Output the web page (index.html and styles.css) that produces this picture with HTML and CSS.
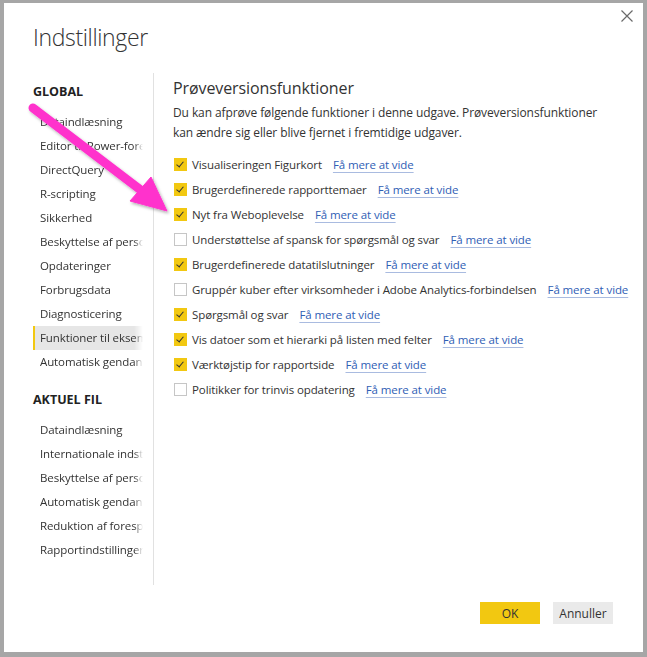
FILE: index.html
```html
<!DOCTYPE html>
<html lang="da">
<head>
<meta charset="utf-8">
<title>Indstillinger</title>
<link rel="stylesheet" href="styles.css">
</head>
<body>
<div class="dialog">
  <div class="header">
    <h1 class="title">Indstillinger</h1>
    <span class="close" aria-label="Luk">
      <svg width="12" height="12" viewBox="0 0 12 12"><path d="M0.5 0.5 L11.5 11.5 M11.5 0.5 L0.5 11.5" stroke="#6a6a6a" stroke-width="1.2" fill="none"/></svg>
    </span>
  </div>
  <div class="main">
    <nav class="sidebar">
      <div class="section-title">GLOBAL</div>
      <ul class="nav-list">
        <li class="nav-item">Dataindlæsning</li>
        <li class="nav-item">Editor til Power-forespørgsel</li>
        <li class="nav-item">DirectQuery</li>
        <li class="nav-item">R-scripting</li>
        <li class="nav-item">Sikkerhed</li>
        <li class="nav-item">Beskyttelse af personlige oplysninger</li>
        <li class="nav-item">Opdateringer</li>
        <li class="nav-item">Forbrugsdata</li>
        <li class="nav-item">Diagnosticering</li>
        <li class="nav-item active">Funktioner til eksempelvisning</li>
        <li class="nav-item">Automatisk gendannelse</li>
      </ul>
      <div class="section-title section-second">AKTUEL FIL</div>
      <ul class="nav-list">
        <li class="nav-item">Dataindlæsning</li>
        <li class="nav-item">Internationale indstillinger</li>
        <li class="nav-item">Beskyttelse af personlige oplysninger</li>
        <li class="nav-item">Automatisk gendannelse</li>
        <li class="nav-item">Reduktion af forespørgsler</li>
        <li class="nav-item">Rapportindstillinger</li>
      </ul>
    </nav>
    <section class="content">
      <h2 class="content-title">Prøveversionsfunktioner</h2>
      <p class="desc">Du kan afprøve følgende funktioner i denne udgave. Prøveversionsfunktioner<br>kan ændre sig eller blive fjernet i fremtidige udgaver.</p>
      <ul class="features">
        <li class="feature"><span class="cb checked"></span><span class="label">Visualiseringen Figurkort</span><a class="link">Få mere at vide</a></li>
        <li class="feature"><span class="cb checked"></span><span class="label">Brugerdefinerede rapporttemaer</span><a class="link">Få mere at vide</a></li>
        <li class="feature"><span class="cb checked"></span><span class="label">Nyt fra Weboplevelse</span><a class="link">Få mere at vide</a></li>
        <li class="feature"><span class="cb"></span><span class="label">Understøttelse af spansk for spørgsmål og svar</span><a class="link">Få mere at vide</a></li>
        <li class="feature"><span class="cb checked"></span><span class="label">Brugerdefinerede datatilslutninger</span><a class="link">Få mere at vide</a></li>
        <li class="feature"><span class="cb"></span><span class="label">Gruppér kuber efter virksomheder i Adobe Analytics-forbindelsen</span><a class="link">Få mere at vide</a></li>
        <li class="feature"><span class="cb checked"></span><span class="label">Spørgsmål og svar</span><a class="link">Få mere at vide</a></li>
        <li class="feature"><span class="cb checked"></span><span class="label">Vis datoer som et hierarki på listen med felter</span><a class="link">Få mere at vide</a></li>
        <li class="feature"><span class="cb checked"></span><span class="label">Værktøjstip for rapportside</span><a class="link">Få mere at vide</a></li>
        <li class="feature"><span class="cb"></span><span class="label">Politikker for trinvis opdatering</span><a class="link">Få mere at vide</a></li>
      </ul>
    </section>
  </div>
  <div class="footer">
    <button class="btn btn-primary">OK</button>
    <button class="btn btn-secondary">Annuller</button>
  </div>
</div>
<svg class="arrow" width="647" height="657" viewBox="0 0 647 657">
  <defs>
    <filter id="sh" x="-20%" y="-20%" width="140%" height="140%">
      <feDropShadow dx="1.5" dy="2" stdDeviation="1.5" flood-color="#000" flood-opacity="0.3"/>
    </filter>
  </defs>
  <g filter="url(#sh)" fill="#ff33cc" stroke="#ff33cc">
    <line x1="33" y1="108" x2="142" y2="191" stroke-width="9" stroke-linecap="round"/>
    <polygon points="167,211 130,201 151,177" stroke-width="1" stroke-linejoin="round"/>
  </g>
</svg>
</body>
</html>
```

FILE: styles.css
```css
* { box-sizing: border-box; }

html, body {
  margin: 0;
  padding: 0;
}

body {
  background: #a6a6a6;
  width: 647px;
  height: 657px;
  padding: 3px 4px 5px 4px;
  font-family: "Open Sans", "Liberation Sans", sans-serif;
  color: #333333;
  position: relative;
  overflow: hidden;
}

.dialog {
  background: #ffffff;
  height: 649px;
  display: flex;
  flex-direction: column;
}

.header {
  height: 70px;
  display: flex;
  justify-content: space-between;
  align-items: flex-start;
  padding: 0 10px 0 29px;
}

.title {
  margin: 18px 0 0 0;
  font-size: 23px;
  font-weight: 300;
  letter-spacing: -0.35px;
  line-height: 32px;
  color: #333333;
}

.close {
  margin-top: 7px;
  width: 12px;
  height: 12px;
  display: block;
}
.close svg { display: block; }

.main {
  height: 512px;
  display: flex;
}

.sidebar {
  width: 150px;
  padding: 9px 10px 0 29px;
  border-right: 1px solid #e1e1e1;
}

.section-title {
  font-size: 12.5px;
  font-weight: 700;
  line-height: 20px;
  color: #222222;
  margin-bottom: 8px;
}

.section-second {
  margin-top: 16px;
}

.nav-list {
  list-style: none;
  margin: 0;
  padding: 0;
}

.nav-item {
  height: 24px;
  line-height: 24px;
  font-size: 11.5px;
  letter-spacing: -0.1px;
  padding-left: 7px;
  white-space: nowrap;
  overflow: hidden;
  color: #333333;
  -webkit-mask-image: linear-gradient(to right, #000 92%, transparent 100%);
  mask-image: linear-gradient(to right, #000 92%, transparent 100%);
}

.nav-item.active {
  background: #e6e6e6;
  border-left: 2px solid #f2c811;
  padding-left: 5px;
}

.content {
  flex: 1;
  padding: 3px 0 0 19px;
}

.content-title {
  margin: 0;
  font-size: 16px;
  letter-spacing: -0.1px;
  font-weight: 400;
  line-height: 24px;
  color: #333333;
}

.desc {
  margin: 3px 0 9px 0;
  font-size: 12px;
  letter-spacing: -0.1px;
  line-height: 20px;
  white-space: nowrap;
  color: #333333;
}

.features {
  list-style: none;
  margin: 0;
  padding: 0;
}

.feature {
  height: 25px;
  display: flex;
  align-items: center;
  font-size: 11.5px;
  letter-spacing: -0.1px;
  white-space: nowrap;
}

.cb {
  width: 13px;
  height: 13px;
  margin-left: 1px;
  margin-right: 5px;
  border: 1px solid #c6c6c6;
  background: #ffffff;
  position: relative;
  flex: none;
}

.cb.checked {
  background: #f2c811;
  border-color: #f2c811;
}

.cb.checked::after {
  content: "";
  position: absolute;
  left: 3px;
  top: 1px;
  width: 3px;
  height: 6px;
  border-right: 1.6px solid #333333;
  border-bottom: 1.6px solid #333333;
  transform: rotate(40deg);
}

.label {
  color: #333333;
}

.link {
  margin-left: 11px;
  color: #2f5eb5;
  text-decoration: underline;
  text-decoration-color: #a9bbe0;
  text-underline-offset: 3px;
  text-decoration-thickness: 1px;
}

.footer {
  display: flex;
  justify-content: flex-end;
  gap: 13px;
  padding: 17px 30px 0 0;
}

.btn {
  width: 60px;
  height: 22px;
  border: none;
  font-family: "Open Sans", "Liberation Sans", sans-serif;
  font-size: 12px;
  color: #333333;
  padding: 0;
}

.btn-primary { background: #f2c811; }
.btn-secondary { background: #eaeaea; }

.arrow {
  position: absolute;
  left: 0;
  top: 0;
  pointer-events: none;
}
```
